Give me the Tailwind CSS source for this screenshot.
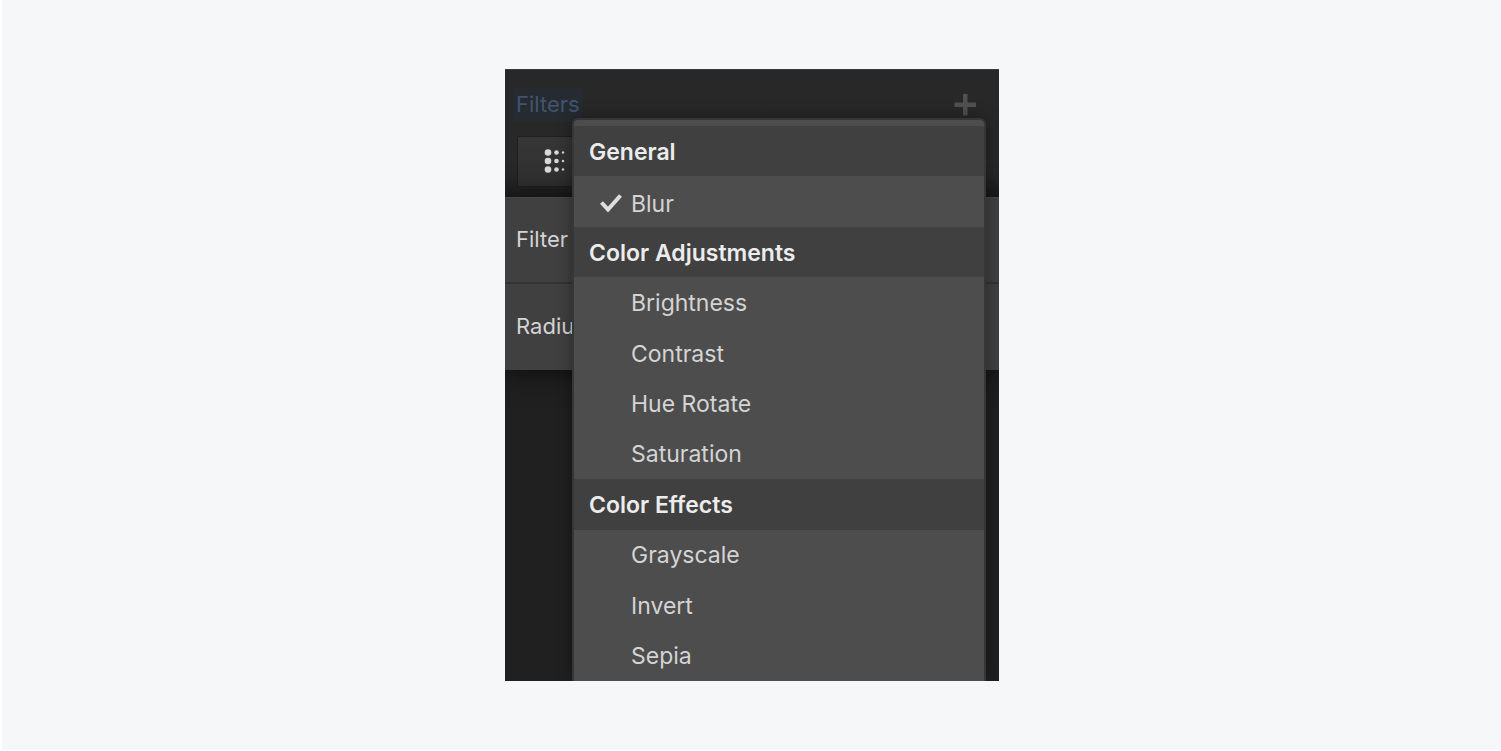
<!DOCTYPE html>
<html lang="en">
<head>
<meta charset="utf-8">
<meta name="viewport" content="width=device-width, initial-scale=1">
<title>Filters</title>
<script src="https://cdn.jsdelivr.net/npm/@tailwindcss/browser@4"></script>
</head>
<body class="min-h-screen flex items-center justify-center border-l-2 border-b border-white bg-[#f6f7f9] pl-px font-['Inter',sans-serif] text-[23px] leading-7 text-[#d4d4d4]">
<main class="relative flex min-h-[612px] w-full max-w-[494px] flex-col overflow-hidden bg-[#202020]">
  <header class="h-32 border-t border-[#3a3a3a] bg-linear-to-b from-[#282828] from-80% to-[#1e1e1e] px-2 pt-[18px]">
    <div class="flex items-center justify-between pr-[14px]">
      <h1 class="rounded-sm bg-[#262b31] px-[3px] pt-[2px] pb-1 text-[22px] text-[#42536d]">Filters</h1>
      <button type="button" aria-label="Add filter" class="size-6 text-[#505050]">
        <svg viewBox="0 0 24 24" class="size-6" fill="currentColor"><path d="M10 1h4.500v8.500H23V14h-8.500v8.500H10V14H1.500V9.500H10z"/></svg>
      </button>
    </div>
    <button type="button" aria-label="Blur filter" class="mt-[14px] ml-1 flex h-[51px] w-40 items-center rounded-xs border border-[#1e1e1e] bg-linear-to-b from-[#363636] to-[#2f2f2f] pb-[2px] pl-[26px]">
      <svg viewBox="0 0 22 26" class="h-[26px] w-[22px]" fill="#d9d9d9">
        <circle cx="4" cy="4.500" r="3.300"/><circle cx="4" cy="13" r="3.300"/><circle cx="4" cy="21.500" r="3.300"/>
        <circle cx="12.500" cy="4.500" r="2.300"/><circle cx="12.500" cy="13" r="2.300"/><circle cx="12.500" cy="21.500" r="2.300"/>
        <circle cx="19" cy="4.500" r="1.200"/><circle cx="19" cy="13" r="1.200"/><circle cx="19" cy="21.500" r="1.200"/>
      </svg>
    </button>
  </header>
  <section class="border-t border-[#484848] bg-[#404040] text-[22px] shadow-[0_2px_24px_#0c0c0c]">
    <div class="flex h-[86px] items-center border-b-2 border-[#343434] px-[11px] pb-[2px]">Filter</div>
    <div class="flex h-[86px] items-center px-[11px] pb-[2px]">Radius</div>
  </section>

  <div role="menu" aria-label="Filter types" class="absolute top-[49px] right-[13px] bottom-0 left-[67px] grid auto-rows-fr rounded-t-md border-2 border-b-0 border-[#363636] bg-[#4d4d4d] pt-[6px] shadow-[0_0_16px_#00000066]">
    <h2 class="flex items-center bg-[#404040] px-[15px] pt-px font-semibold text-[#ececec]">General</h2>
    <button type="button" role="menuitem" class="flex items-center pt-1 pl-[25px] text-left">
      <svg viewBox="0 0 24 20" class="mr-2 h-5 w-6" fill="none" stroke="#dedede" stroke-width="4"><path d="M2.500 8.500L9 15.500L21.500 1.500"/></svg>Blur</button>
    <h2 class="flex items-center bg-[#404040] px-[15px] pt-px font-semibold text-[#ececec]">Color Adjustments</h2>
    <button type="button" role="menuitem" class="flex items-center pt-px pl-[57px] text-left">Brightness</button>
    <button type="button" role="menuitem" class="flex items-center pt-px pl-[57px] text-left">Contrast</button>
    <button type="button" role="menuitem" class="flex items-center pt-px pl-[57px] text-left">Hue Rotate</button>
    <button type="button" role="menuitem" class="flex items-center pt-px pl-[57px] text-left">Saturation</button>
    <h2 class="flex items-center bg-[#404040] px-[15px] pt-px font-semibold text-[#ececec]">Color Effects</h2>
    <button type="button" role="menuitem" class="flex items-center pt-px pl-[57px] text-left">Grayscale</button>
    <button type="button" role="menuitem" class="flex items-center pt-px pl-[57px] text-left">Invert</button>
    <button type="button" role="menuitem" class="flex items-center pt-px pl-[57px] text-left">Sepia</button>
  </div>
</main>
</body>
</html>
